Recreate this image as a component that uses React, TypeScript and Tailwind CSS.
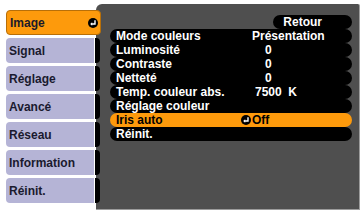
import React from "react";

const EnterIcon = () => (
  <svg width="10" height="10" viewBox="0 0 10 10" className="shrink-0">
    <circle cx="5" cy="5" r="5" fill="#000" />
    <path d="M7 2.3 V6 H3.6" stroke="#fff" strokeWidth="1.4" fill="none" />
    <path d="M2.2 6 L4.2 4.3 L4.2 7.7 Z" fill="#fff" />
  </svg>
);

const tabs = ["Image", "Signal", "Réglage", "Avancé", "Réseau", "Information", "Réinit."];

const rows: { label: string; value?: string; ml?: string; active?: boolean }[] = [
  { label: "Mode couleurs", value: "Présentation", ml: "ml-[11px]" },
  { label: "Luminosité", value: "0", ml: "ml-[24px]" },
  { label: "Contraste", value: "0", ml: "ml-[24px]" },
  { label: "Netteté", value: "0", ml: "ml-[24px]" },
  { label: "Temp. couleur abs.", value: "7500  K", ml: "ml-[14px]" },
  { label: "Réglage couleur" },
  { label: "Iris auto", value: "Off", active: true },
  { label: "Réinit." },
];

export default function App() {
  return (
    <div
      className="w-[362px] h-[212px] bg-white flex items-start font-bold text-[12px] leading-none overflow-hidden"
      style={{ fontFamily: '"Liberation Sans", Arial, sans-serif' }}
    >
      <div className="relative z-10 mt-[10px] ml-[6px] flex flex-col gap-[3px] w-[95px] shrink-0">
        {tabs.map((t, i) =>
          i === 0 ? (
            <div
              key={t}
              className="h-[25px] flex items-center justify-between pl-[3px] pr-[2px] bg-[#fd9a0c] border border-[#b86f08] rounded-[4px] text-[#1a1a2a]"
            >
              <span>{t}</span>
              <EnterIcon />
            </div>
          ) : (
            <div key={t} className="h-[25px] flex items-stretch">
              <div className="w-[88px] flex items-center pl-[3px] bg-[#b5b4d6] rounded-l-[4px] text-[#1a1a2e]">
                {t}
              </div>
              <div className="ml-[1px] w-[5px] bg-black rounded-r-[4px]" />
            </div>
          )
        )}
      </div>
      <div className="ml-[-5px] mt-[4px] w-[264px] h-[206px] bg-[#4f4f4f] rounded-tl-[6px] rounded-tr-[2px] border-r border-b border-[#9c9c9c] flex flex-col pt-[11px] pl-[14px] pr-[7px] text-white">
        <div className="flex justify-end">
          <div className="w-[79px] h-[14px] bg-black rounded-full flex items-center justify-end pr-[30px]">
            Retour
          </div>
        </div>
        {rows.map((r) => (
          <div
            key={r.label}
            className={`h-[14px] rounded-full flex items-center pl-[6px] ${
              r.active ? "bg-[#fd9a0c] text-black" : "bg-black text-white"
            }`}
          >
            <span className="w-[125px] shrink-0">{r.label}</span>
            {r.active ? (
              <span className="flex items-center gap-[1px]">
                <EnterIcon />
                <span>{r.value}</span>
              </span>
            ) : r.value ? (
              <span className={`whitespace-pre ${r.ml}`}>{r.value}</span>
            ) : null}
          </div>
        ))}
      </div>
    </div>
  );
}
